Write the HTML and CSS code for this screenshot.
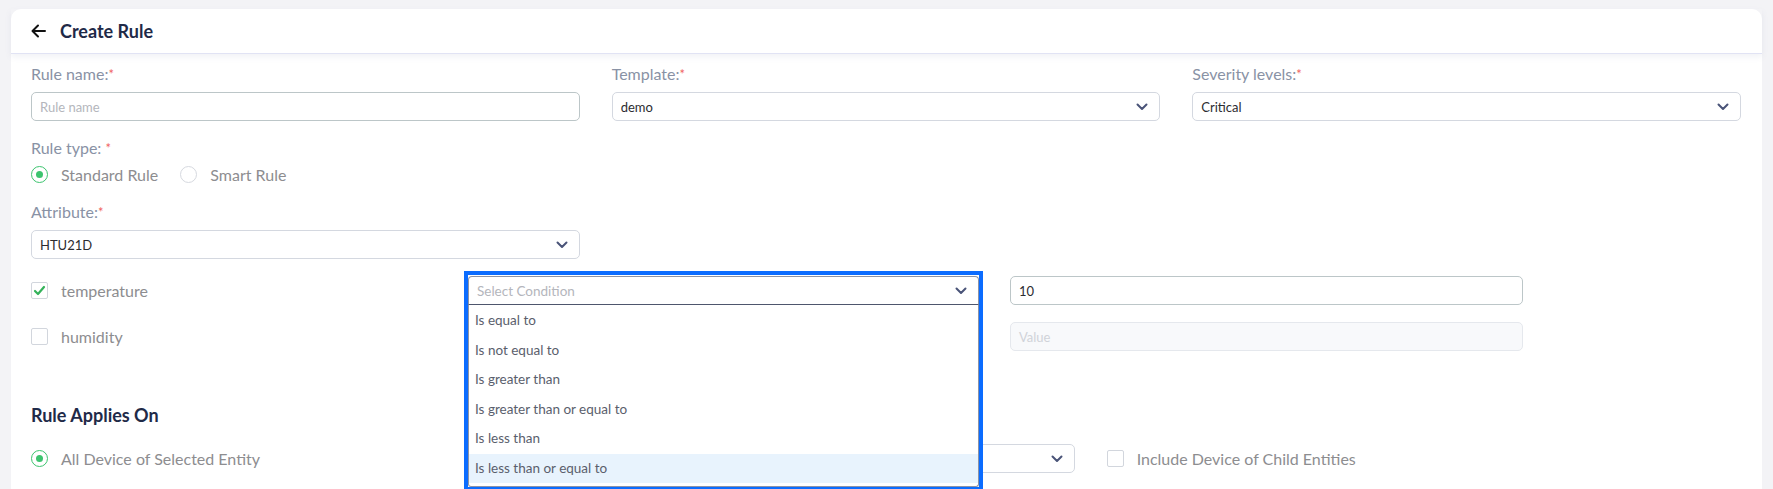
FILE: index.html
```html
<!DOCTYPE html>
<html>

<head>
    <link rel="stylesheet" href="styles.css">
    <title>Create Rule</title>
</head>

<body>
    <div class="card">
        <div class="card-header">
            <svg class="back-icon" width="15" height="14" viewBox="0 0 15 14">
                <path d="M14 7H1.8M7 1.5L1.5 7L7 12.5" fill="none" stroke="#111" stroke-width="2"
                    stroke-linecap="round" stroke-linejoin="round" />
            </svg>
            <h1 class="title">Create Rule</h1>
        </div>

        <div class="card-body">
            <div class="row-3">
                <div class="field">
                    <label class="label">Rule name:<span class="req">*</span></label>
                    <div class="input"><span class="placeholder">Rule name</span></div>
                </div>
                <div class="field">
                    <label class="label">Template:<span class="req">*</span></label>
                    <div class="select">
                        <span>demo</span>
                        <svg class="chevron" width="12" height="8" viewBox="0 0 12 8">
                            <path d="M1.5 1.5L6 6L10.5 1.5" />
                        </svg>
                    </div>
                </div>
                <div class="field">
                    <label class="label">Severity levels:<span class="req">*</span></label>
                    <div class="select">
                        <span>Critical</span>
                        <svg class="chevron" width="12" height="8" viewBox="0 0 12 8">
                            <path d="M1.5 1.5L6 6L10.5 1.5" />
                        </svg>
                    </div>
                </div>
            </div>

            <label class="label label-type">Rule type: <span class="req">*</span></label>
            <div class="radio-group">
                <div class="radio-item"><span class="radio checked"></span>Standard Rule</div>
                <div class="radio-item"><span class="radio"></span>Smart Rule</div>
            </div>

            <div class="row-3 attr-row">
                <div class="field">
                    <label class="label">Attribute:<span class="req">*</span></label>
                    <div class="select">
                        <span>HTU21D</span>
                        <svg class="chevron" width="12" height="8" viewBox="0 0 12 8">
                            <path d="M1.5 1.5L6 6L10.5 1.5" />
                        </svg>
                    </div>
                </div>
            </div>

            <div class="cond-row first">
                <div class="check-item">
                    <span class="checkbox checked">
                        <svg width="17" height="17" viewBox="0 0 17 17">
                            <path d="M4 9L7 12L13 5" fill="none" stroke="#34b25a" stroke-width="2.2"
                                stroke-linecap="round" stroke-linejoin="round" />
                        </svg>
                    </span>
                    temperature
                </div>
                <div class="cond-cell">
                    <div class="dropdown">
                        <div class="select open">
                            <span class="placeholder">Select Condition</span>
                            <svg class="chevron" width="12" height="8" viewBox="0 0 12 8">
                                <path d="M1.5 1.5L6 6L10.5 1.5" />
                            </svg>
                        </div>
                        <ul class="menu">
                            <li>Is equal to</li>
                            <li>Is not equal to</li>
                            <li>Is greater than</li>
                            <li>Is greater than or equal to</li>
                            <li>Is less than</li>
                            <li class="active">Is less than or equal to</li>
                        </ul>
                    </div>
                </div>
                <div class="input input-value">10</div>
            </div>

            <div class="cond-row">
                <div class="check-item"><span class="checkbox"></span>humidity</div>
                <div class="cond-cell">
                    <div class="select">
                        <span></span>
                        <svg class="chevron" width="12" height="8" viewBox="0 0 12 8">
                            <path d="M1.5 1.5L6 6L10.5 1.5" />
                        </svg>
                    </div>
                </div>
                <div class="input disabled"><span class="placeholder">Value</span></div>
            </div>

            <h2 class="section-title">Rule Applies On</h2>

            <div class="row-3 applies-row">
                <div class="radio-item"><span class="radio checked"></span>All Device of Selected Entity</div>
                <div class="applies-right">
                    <div class="select select-entity">
                        <span></span>
                        <svg class="chevron" width="12" height="8" viewBox="0 0 12 8">
                            <path d="M1.5 1.5L6 6L10.5 1.5" />
                        </svg>
                    </div>
                    <div class="check-item"><span class="checkbox"></span>Include Device of Child Entities</div>
                </div>
            </div>
        </div>
    </div>
</body>

</html>
```

FILE: styles.css
```css
html,
body {
    height: 100%;
}

body {
    margin: 0;
    padding: 9px 11px 0 11px;
    box-sizing: border-box;
    background: #f3f3f6;
    font-family: Lato, "Open Sans", sans-serif;
    overflow: hidden;
}

.card {
    background: #ffffff;
    border-radius: 10px 10px 0 0;
    height: 100%;
}

.card-header {
    display: flex;
    align-items: center;
    height: 44px;
    padding-left: 20px;
    border-bottom: 1px solid #e1e3f4;
    box-shadow: 0 3px 6px rgba(120, 125, 170, 0.1);
}

.back-icon {
    margin-right: 14px;
}

.title {
    margin: 0;
    font-size: 18px;
    font-weight: 700;
    color: #1f2a48;
}

.card-body {
    padding: 10px 21px 0 20px;
}

.row-3 {
    display: grid;
    grid-template-columns: repeat(3, 1fr);
    column-gap: 32px;
}

.label {
    display: block;
    line-height: 20px;
    font-size: 16px;
    color: #8992a5;
    margin-bottom: 8px;
}

.req {
    color: #f06262;
    font-size: 13px;
    vertical-align: top;
}

/* text inputs and selects share the same box */
.input,
.select {
    box-sizing: border-box;
    height: 29px;
    display: flex;
    align-items: center;
    padding: 0 8px;
    border: 1px solid #d4d8e0;
    border-radius: 5px;
    font-size: 13px;
    color: #2c2c30;
    background: #ffffff;
}

.input {
    border-color: #bcc6c8;
}

.select {
    justify-content: space-between;
    padding-right: 11px;
}

.placeholder {
    color: #b4b6bc;
}

.chevron {
    flex-shrink: 0;
}

.chevron path {
    fill: none;
    stroke: #4a5478;
    stroke-width: 2;
    stroke-linecap: round;
    stroke-linejoin: round;
}

.label-type {
    margin-top: 17px;
    margin-bottom: 6px;
}

.radio-group {
    display: flex;
    gap: 22px;
}

.radio-item,
.check-item {
    display: flex;
    align-items: center;
    height: 20px;
    font-size: 16px;
    color: #8d8d90;
    white-space: nowrap;
}

.radio {
    box-sizing: border-box;
    flex-shrink: 0;
    width: 17px;
    height: 17px;
    margin-right: 13px;
    border: 1px solid #d6d9df;
    border-radius: 50%;
    display: flex;
    align-items: center;
    justify-content: center;
}

.radio.checked {
    border: 1.5px solid #3cc46e;
}

.radio.checked::after {
    content: "";
    width: 7px;
    height: 7px;
    border-radius: 50%;
    background: #3cc46e;
}

.checkbox {
    box-sizing: border-box;
    flex-shrink: 0;
    width: 17px;
    height: 17px;
    margin-right: 13px;
    border: 1px solid #d2d6dd;
    border-radius: 2px;
    display: flex;
}

.checkbox svg {
    margin: -1px;
}

.attr-row {
    margin-top: 18px;
}

.cond-row {
    display: grid;
    grid-template-columns: 406px 511px 513px;
    column-gap: 31px;
    align-items: center;
    height: 29px;
    margin-top: 17px;
}

.cond-cell {
    position: relative;
    height: 29px;
}

.input.disabled {
    background: #f8f9fb;
    border-color: #e5e8ed;
}

.input.disabled .placeholder {
    color: #d0d3d9;
}

/* open condition dropdown, drawn over the rows below */
.dropdown {
    position: absolute;
    top: -5px;
    left: -4px;
    right: -4px;
    z-index: 2;
    padding-top: 1px;
    border: 4px solid #0b6cff;
    background: #ffffff;
}

.select.open {
    border-color: #8d93a5;
    border-bottom-color: #4e566d;
    border-radius: 4px 4px 0 0;
    font-size: 13.5px;
}

.menu {
    list-style: none;
    margin: 0;
    padding: 1px 0 3px 0;
    border: 1px solid #8d93a5;
    border-top: none;
    border-radius: 0 0 3px 3px;
}

.menu li {
    height: 29.5px;
    line-height: 29.5px;
    padding-left: 6px;
    font-size: 13.5px;
    color: #5a5e6c;
}

.menu li.active {
    background: #e8f3fd;
}

.section-title {
    margin: 52px 0 17px 0;
    line-height: 24px;
    font-size: 18px;
    font-weight: 700;
    color: #1f2a48;
}

.applies-row {
    align-items: center;
}

.applies-right {
    grid-column: span 2;
    display: flex;
    align-items: center;
    gap: 32px;
}

.select-entity {
    width: 463px;
}
```
